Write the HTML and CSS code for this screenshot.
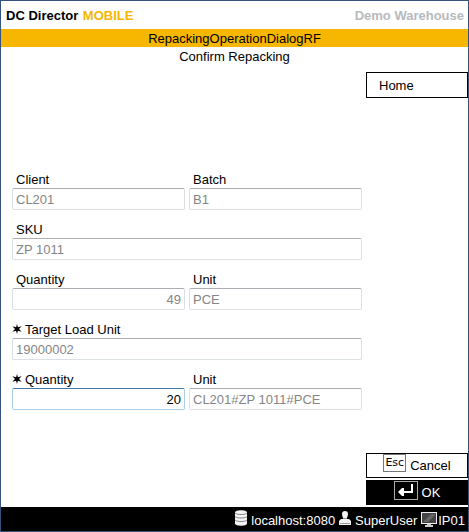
FILE: index.html
```html
<!DOCTYPE html>
<html lang="en">
<head>
<meta charset="utf-8">
<meta name="viewport" content="width=device-width, initial-scale=1">
<title>DC Director Mobile</title>
<link rel="stylesheet" href="styles.css">
</head>
<body>
<div class="app">
  <header class="header">
    <div class="brand">DC Director <span class="brand-accent">MOBILE</span></div>
    <div class="site">Demo Warehouse</div>
  </header>
  <h1 class="dialog-name">RepackingOperationDialogRF</h1>
  <h2 class="dialog-title">Confirm Repacking</h2>
  <main class="main">
    <form class="form" id="repack">
      <div class="field">
        <label for="client">Client</label>
        <input id="client" type="text" value="CL201" disabled>
      </div>
      <div class="field">
        <label for="batch">Batch</label>
        <input id="batch" type="text" value="B1" disabled>
      </div>
      <div class="field wide">
        <label for="sku">SKU</label>
        <input id="sku" type="text" value="ZP 1011" disabled>
      </div>
      <div class="field">
        <label for="quantity">Quantity</label>
        <input id="quantity" class="number" type="text" value="49" disabled>
      </div>
      <div class="field">
        <label for="unit">Unit</label>
        <input id="unit" type="text" value="PCE" disabled>
      </div>
      <div class="field wide">
        <label class="required" for="target"><svg class="star" viewBox="0 0 10 10" aria-hidden="true"><path d="M5 0L5.900 3.300L9.600 2.200L7 5L9.600 7.800L5.900 6.700L5 10L4.100 6.700L.4 7.800L3 5L.4 2.200L4.100 3.300Z"/></svg>Target Load Unit</label>
        <input id="target" type="text" value="19000002" disabled>
      </div>
      <div class="field">
        <label class="required" for="target-quantity"><svg class="star" viewBox="0 0 10 10" aria-hidden="true"><path d="M5 0L5.900 3.300L9.600 2.200L7 5L9.600 7.800L5.900 6.700L5 10L4.100 6.700L.4 7.800L3 5L.4 2.200L4.100 3.300Z"/></svg>Quantity</label>
        <input id="target-quantity" class="number active" type="text" value="20">
      </div>
      <div class="field">
        <label for="target-unit">Unit</label>
        <input id="target-unit" type="text" value="CL201#ZP 1011#PCE" disabled>
      </div>
    </form>
    <div class="actions">
      <button class="button home" type="button">Home</button>
      <button class="button cancel" type="button"><kbd class="key">Esc</kbd>Cancel</button>
      <button class="button ok" type="submit" form="repack"><svg class="enter" viewBox="0 0 24 19" aria-hidden="true"><rect x=".5" y=".5" width="23" height="18" fill="#000" stroke="#aaa"/><path d="M17 3h2v9H10v3H8L4 11L8 7h2v3h7z" fill="#fff"/></svg>OK</button>
    </div>
  </main>
  <footer class="footer">
    <svg class="database" viewBox="0 0 12 16" aria-hidden="true"><path d="M0 2.500C0-.5 12-.5 12 2.500V13.500C12 16.500 0 16.500 0 13.500Z" fill="#f4f4f4"/><path d="M0 3C1 5 11 5 12 3M0 6.500C1 8.500 11 8.500 12 6.500M0 10C1 12 11 12 12 10" fill="none" stroke="#888"/></svg>
    <span>localhost:8080</span>
    <svg class="user" viewBox="0 0 12 16" aria-hidden="true"><path d="M6 1a3 3 0 0 1 3 3c0 2-1 3-1 4v1h2l2 2v4H0v-4l2-2h2V8C4 7 3 6 3 4a3 3 0 0 1 3-3z" fill="#f4f4f4"/><path d="M4 8.500h4M1 13.500h10" stroke="#999" fill="none"/></svg>
    <span class="user-name">SuperUser</span>
    <span class="station"><svg class="monitor" viewBox="0 0 16 16" aria-hidden="true"><rect x=".5" y="1.500" width="15" height="11" fill="#444" stroke="#eee"/><path d="M2 11L10 3h4v1L7 11z" fill="#666"/><path d="M6 13h4v1h2v2H4v-2h2z" fill="#ccc"/></svg>IP01</span>
  </footer>
</div>
</body>
</html>
```
FILE: styles.css
```css
* {
  box-sizing: border-box;
}

body {
  margin: 0;
  background: #fff;
  color: #000;
  font: 13px/18px "Liberation Sans", Arial, sans-serif;
}

.app {
  display: flex;
  flex-direction: column;
  min-height: 100vh;
  border: 1px solid #34547f;
}

.header {
  display: flex;
  justify-content: space-between;
  align-items: center;
  height: 28px;
  padding: 2px 4px 0 5px;
  font-weight: bold;
}

.brand-accent {
  margin-left: 1px;
  color: #f7b600;
}

.site {
  color: #b7babd;
}

.dialog-name,
.dialog-title {
  height: 18px;
  margin: 0;
  font-size: 13px;
  font-weight: normal;
  line-height: 20px;
  text-align: center;
}

.dialog-name {
  background: #f7b600;
}

.main {
  display: flex;
  flex: 1;
  gap: 4px;
  padding: 7px 0 2px 11px;
}

.form {
  display: grid;
  flex: 1;
  grid-template-columns: 1fr 1fr;
  align-content: start;
  gap: 10px 4px;
  padding-top: 98px;
}

.field {
  display: flex;
  flex-direction: column;
  min-width: 0;
}

.wide {
  grid-column: 1 / -1;
}

.field label {
  height: 18px;
  padding-left: 4px;
  line-height: 20px;
}

.field .required {
  display: flex;
  gap: 3px;
  padding-left: 0;
}

.star {
  width: 10px;
  height: 10px;
  margin-top: 4px;
}

.field input {
  width: 100%;
  height: 22px;
  margin: 0;
  padding: 0 3px;
  border: 1px solid #dbdfe6;
  border-top-color: #abadb3;
  border-radius: 2px;
  background: #fff;
  color: #000;
  font: inherit;
  outline: 0;
}

.field input:disabled {
  color: #858585;
}

.field .number {
  text-align: right;
}

.field .active {
  border-color: #a9cfe8;
  border-top-color: #3d7bad;
}

.actions {
  display: flex;
  flex-direction: column;
  gap: 2px;
  width: 102px;
}

.button {
  display: flex;
  align-items: center;
  justify-content: center;
  gap: 4px;
  height: 25px;
  padding: 0;
  border: 1px solid #000;
  background: #fff;
  color: #000;
  font: inherit;
}

.home {
  justify-content: flex-start;
  height: 26px;
  margin-bottom: auto;
  padding: 2px 0 0 12px;
}

.key {
  height: 18px;
  margin-bottom: 5px;
  padding: 0 1px;
  border: 1px solid #777;
  font: 11px/15px "DejaVu Sans", sans-serif;
}

.ok {
  background: #000;
  color: #fff;
}

.enter {
  width: 24px;
  height: 19px;
  margin-bottom: 4px;
}

.footer {
  display: flex;
  align-items: center;
  justify-content: flex-end;
  gap: 4px;
  height: 24px;
  padding: 3px 3px 0 0;
  background: #000;
  color: #fff;
}

.database,
.user {
  width: 12px;
  height: 16px;
  margin-bottom: 6px;
}

.station {
  display: flex;
  align-items: center;
  gap: 1px;
}

.monitor {
  width: 16px;
  height: 16px;
  margin-bottom: 4px;
}
```
